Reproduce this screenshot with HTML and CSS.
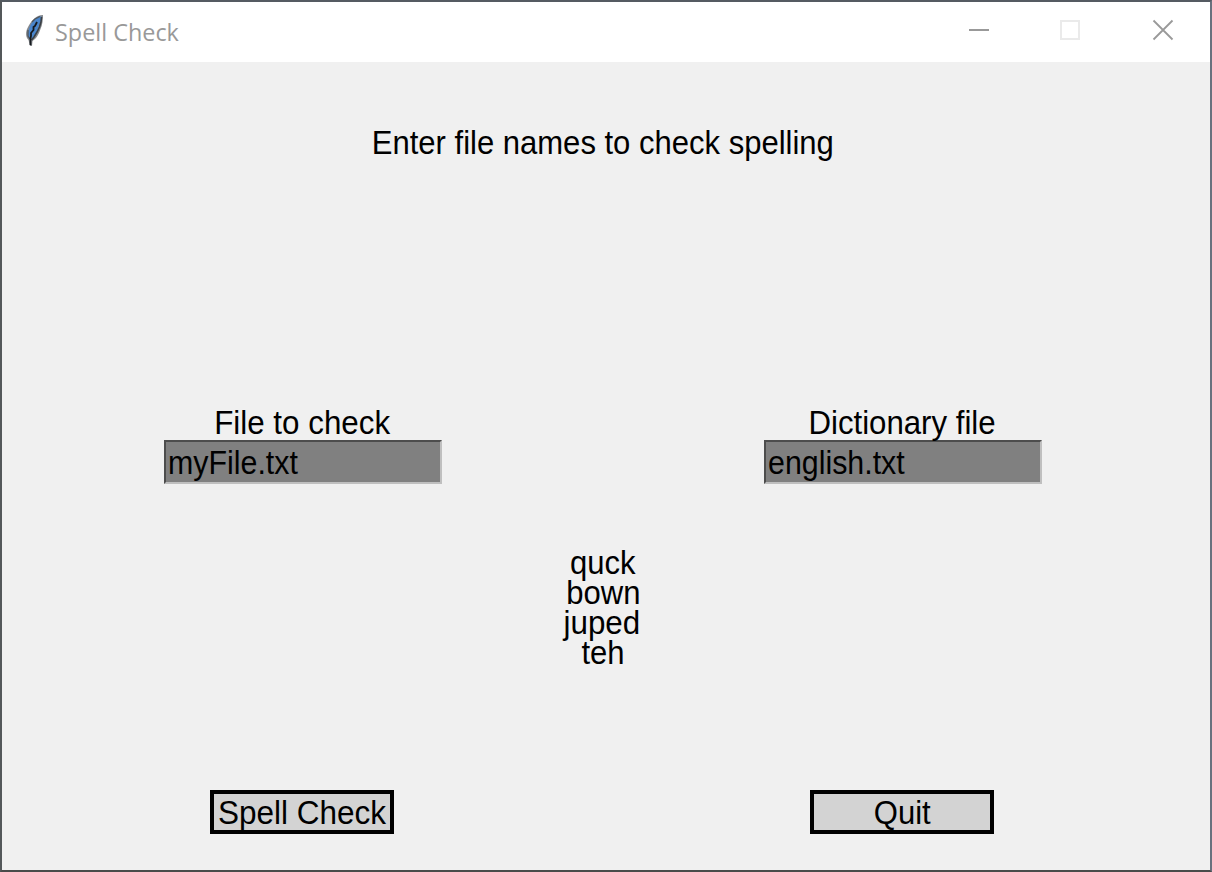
FILE: index.html
```html
<!DOCTYPE html>
<html lang="en">
<head>
<meta charset="utf-8">
<title>Spell Check</title>
<link rel="stylesheet" href="styles.css">
</head>
<body>
<div class="window">
  <header class="titlebar">
    <svg class="feather" width="20" height="34" viewBox="0 0 20 34">
      <path d="M19 1C12 1 7 7 3.500 14C1.500 18 1.500 23 4.500 26L6 32H8L8.500 27C12 25 15 20 16.500 15C18.500 11 19 5 19 1Z" fill="#85888c"/>
      <path d="M17.500 2.500C11 3 7 9 5 15C3.500 19 3.500 22 5 25L9 24C13 20 14 15 15 11C17 8 18 4 17.500 2.500Z" fill="#4a86cc"/>
      <path d="M17.500 3L17 8L15.500 13L13 18L10 23L7.500 26" fill="none" stroke="#3b4045" stroke-width="1.600"/>
      <path d="M4 16V22L6 25M8 8L11 5L16 2.500" fill="none" stroke="#50565c" stroke-width="1.300"/>
      <path d="M13 8L11 12L9.500 13V16L7 19V22L6.500 24V31" fill="none" stroke="#15191e" stroke-width="1.800"/>
    </svg>
    <h1 class="title"><span class="fit">Spell Check</span></h1>
    <div class="controls">
      <svg class="control" width="22" height="22" viewBox="0 0 22 22"><path d="M1 11H21" stroke="#999" stroke-width="2"/></svg>
      <svg class="control" width="22" height="22" viewBox="0 0 22 22"><path d="M2 2H20V20H2Z" fill="none" stroke="#eaeaea" stroke-width="2"/></svg>
      <svg class="control" width="22" height="22" viewBox="0 0 22 22"><path d="M1.500 1.500L20.500 20.500M20.500 1.500L1.500 20.500" stroke="#999" stroke-width="1.800"/></svg>
    </div>
  </header>
  <main class="content">
    <p class="prompt"><span class="fit">Enter file names to check spelling</span></p>
    <div class="columns fields">
      <div class="field">
        <span class="label"><span class="fit fit-check">File to check</span></span>
        <div class="entry"><span class="fit">myFile.txt</span></div>
      </div>
      <div class="field">
        <span class="label"><span class="fit fit-dictionary">Dictionary file</span></span>
        <div class="entry"><span class="fit">english.txt</span></div>
      </div>
    </div>
    <div class="words">
      <span class="fit">quck</span>
      <span class="fit">bown</span>
      <span class="fit fit-juped">juped</span>
      <span class="fit">teh</span>
    </div>
    <div class="columns actions">
      <button class="button"><span class="fit fit-action">Spell Check</span></button>
      <button class="button"><span class="fit">Quit</span></button>
    </div>
  </main>
</div>
</body>
</html>
```
FILE: styles.css
```css
* { box-sizing: border-box; }
body { margin: 0; }
.window {
  width: 1212px;
  height: 872px;
  border: 2px solid;
  border-color: #555b62 #69717e #494b4a #54585a;
  background: #f0f0f0;
  color: #000;
  font: 33px/30px "Liberation Sans", Arial, sans-serif;
}
.titlebar {
  display: flex;
  height: 60px;
  padding: 12px 36px 0 22px;
  background: #fff;
}
.feather { flex: none; }
.title {
  margin: 3px 0 0 11px;
  color: #999;
  font: 400 24px/30px "Open Sans", "Noto Sans", sans-serif;
}
.title .fit { transform: scaleX(.975); transform-origin: left; }
.controls {
  display: flex;
  gap: 70px;
  margin: 5px 0 0 auto;
}
.control { flex: none; }
.control:nth-child(2) { margin: 0 1px 0 -1px; }
.content {
  display: flex;
  flex-direction: column;
  align-items: center;
  padding-right: 6px;
}
.fit {
  display: inline-block;
  white-space: nowrap;
  transform: scaleX(.94);
}
.fit-check { transform: translateX(-.5px) scaleX(.95); }
.fit-dictionary { transform: translateX(-1px) scaleX(.945); }
.fit-juped { transform: translateX(-1.5px) scaleX(.95); }
.prompt { margin: 66px 0 0; }
.columns { display: flex; }
.fields { gap: 322px; margin-top: 250px; }
.field { width: 278px; }
.label { display: block; height: 32px; text-align: center; }
.entry {
  height: 44px;
  padding: 6px 2px;
  border: 2px solid;
  border-color: #4d4d4d #bfbfbf #bfbfbf #4d4d4d;
  background: #808080;
}
.entry .fit { transform: scaleX(.92); transform-origin: left; }
.words {
  display: flex;
  flex-direction: column;
  align-items: center;
  margin-top: 64px;
}
.actions { gap: 416px; margin: 122px 2px 0 0; }
.button {
  display: flex;
  align-items: center;
  justify-content: center;
  width: 184px;
  height: 44px;
  padding: 2px 0 0;
  border: 4px solid #000;
  background: #d3d3d3;
  color: #000;
  font: inherit;
}
.button .fit-action { transform: scaleX(.955); }
```
